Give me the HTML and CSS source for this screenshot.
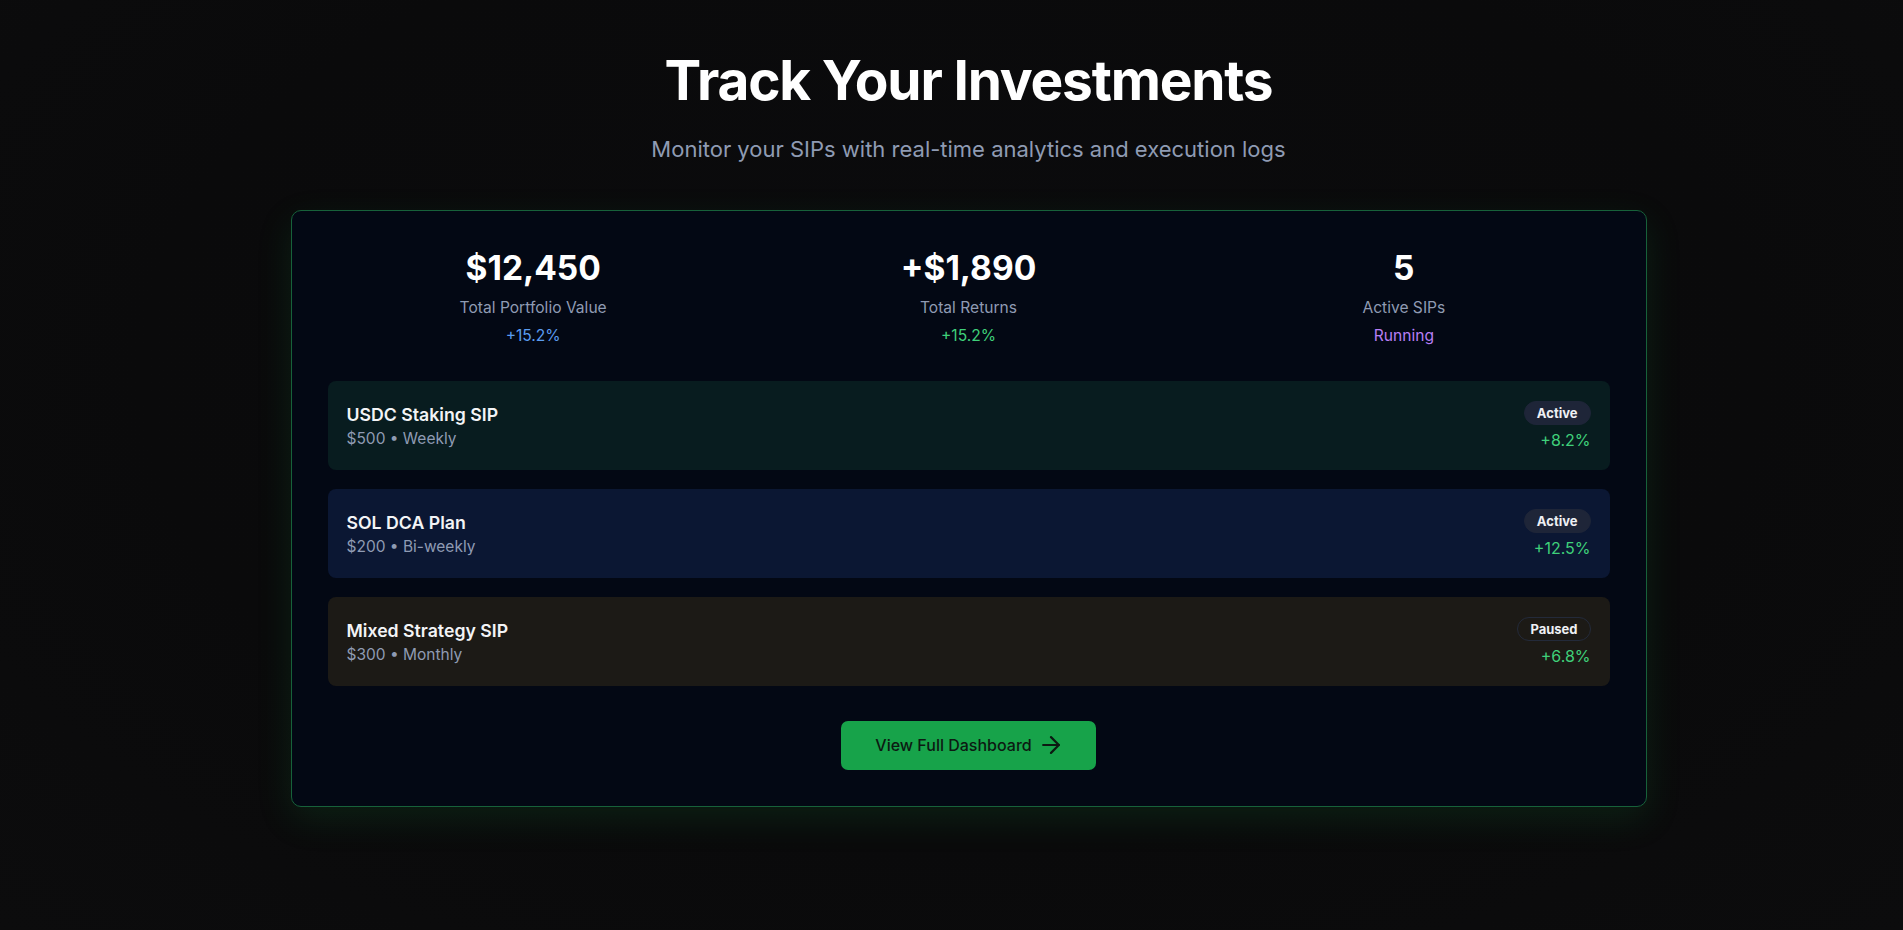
FILE: index.html
```html
<!DOCTYPE html>
<html lang="en">
<head>
<meta charset="utf-8">
<title>Track Your Investments</title>
<link rel="stylesheet" href="styles.css">
</head>
<body>
<main class="page">
  <h1 class="title">Track Your Investments</h1>
  <p class="subtitle">Monitor your SIPs with real-time analytics and execution logs</p>

  <section class="card">
    <div class="stats">
      <div class="stat">
        <div class="stat-value">$12,450</div>
        <div class="stat-label">Total Portfolio Value</div>
        <div class="stat-note blue">+15.2%</div>
      </div>
      <div class="stat">
        <div class="stat-value">+$1,890</div>
        <div class="stat-label">Total Returns</div>
        <div class="stat-note green">+15.2%</div>
      </div>
      <div class="stat">
        <div class="stat-value">5</div>
        <div class="stat-label">Active SIPs</div>
        <div class="stat-note purple">Running</div>
      </div>
    </div>

    <div class="plans">
      <div class="plan plan-teal">
        <div class="plan-info">
          <div class="plan-name">USDC Staking SIP</div>
          <div class="plan-meta">$500 • Weekly</div>
        </div>
        <div class="plan-side">
          <span class="badge">Active</span>
          <span class="plan-return">+8.2%</span>
        </div>
      </div>
      <div class="plan plan-blue">
        <div class="plan-info">
          <div class="plan-name">SOL DCA Plan</div>
          <div class="plan-meta">$200 • Bi-weekly</div>
        </div>
        <div class="plan-side">
          <span class="badge">Active</span>
          <span class="plan-return">+12.5%</span>
        </div>
      </div>
      <div class="plan plan-brown">
        <div class="plan-info">
          <div class="plan-name">Mixed Strategy SIP</div>
          <div class="plan-meta">$300 • Monthly</div>
        </div>
        <div class="plan-side">
          <span class="badge badge-outline">Paused</span>
          <span class="plan-return">+6.8%</span>
        </div>
      </div>
    </div>

    <div class="actions">
      <button class="cta" type="button">
        <span>View Full Dashboard</span>
        <svg class="cta-icon" viewBox="4 4 16 16" width="18" height="18" fill="none" stroke="currentColor" stroke-width="1.9" stroke-linecap="round" stroke-linejoin="round"><path d="M5 12h14"/><path d="M12 5l7 7-7 7"/></svg>
      </button>
    </div>
  </section>
</main>
</body>
</html>
```

FILE: styles.css
```css
* { box-sizing: border-box; }

html, body {
  margin: 0;
  height: 100%;
}

body {
  background: #0a0a0b;
  color: #ffffff;
  font-family: Inter, "Noto Sans", "Liberation Sans", sans-serif;
}

.page {
  min-height: 100%;
  padding: 50px 0 0 34px;
  text-align: center;
  background: radial-gradient(ellipse at 50% 40%, #0b0b0d 0%, #0a0a0b 60%, #0c0c0d 100%);
}

.title {
  margin: 0;
  font-size: 55px;
  line-height: 1.1;
  font-weight: 700;
  letter-spacing: -1.2px;
  color: #ffffff;
}

.subtitle {
  margin: 23px 0 0;
  font-size: 22px;
  line-height: 30px;
  color: #8f9bb3;
}

.card {
  width: 1356px;
  margin: 46px auto 0;
  padding: 36px;
  border: 1px solid #17613a;
  border-radius: 10px;
  background: #030814;
  box-shadow: 0 12px 36px rgba(22, 163, 74, 0.14);
}

.stats {
  display: grid;
  grid-template-columns: repeat(3, 1fr);
  gap: 24px;
  padding-top: 1px;
  margin-bottom: 34px;
}

.stat-value {
  font-size: 33.5px;
  line-height: 40px;
  font-weight: 700;
  color: #ffffff;
}

.stat-label {
  margin-top: 9px;
  font-size: 15.6px;
  line-height: 22px;
  color: #8f9bb3;
}

.stat-note {
  margin-top: 6px;
  font-size: 15.6px;
  line-height: 22px;
}

.blue { color: #5b9cf0; }
.green { color: #3fd07a; }
.purple { color: #b77ef5; }

.plans {
  display: flex;
  flex-direction: column;
  gap: 19px;
}

.plan {
  display: flex;
  align-items: center;
  justify-content: space-between;
  padding: 20px 19px 19px;
  border-radius: 8px;
  text-align: left;
}

.plan-teal { background: #081c1f; }
.plan-blue { background: #0b1733; }
.plan-brown { background: #1c1a16; }

.plan-name {
  font-size: 17.7px;
  line-height: 26px;
  font-weight: 600;
  color: #f3f4f6;
}

.plan-meta {
  font-size: 15.5px;
  line-height: 22px;
  color: #8f9bb3;
}

.plan-side {
  display: flex;
  flex-direction: column;
  align-items: flex-end;
  gap: 4px;
}

.badge {
  display: inline-flex;
  align-items: center;
  height: 24px;
  padding: 0 12px;
  border-radius: 999px;
  background: #1e2538;
  border: 1px solid #1e2538;
  font-size: 13px;
  font-weight: 700;
  color: #eef0f4;
}

.badge-outline {
  background: transparent;
  border-color: #232a3a;
}

.plan-return {
  font-size: 16px;
  line-height: 22px;
  color: #3fd07a;
}

.actions {
  display: flex;
  justify-content: center;
  margin-top: 35px;
}

.cta {
  display: inline-flex;
  align-items: center;
  gap: 10px;
  height: 49px;
  padding: 0 36px 0 34px;
  border: none;
  border-radius: 7px;
  background: #17a34a;
  color: #0c1a12;
  font-family: Inter, "Noto Sans", "Liberation Sans", sans-serif;
  font-size: 16px;
  font-weight: 500;
  white-space: nowrap;
  cursor: pointer;
}

.cta-icon {
  flex: none;
}
```
